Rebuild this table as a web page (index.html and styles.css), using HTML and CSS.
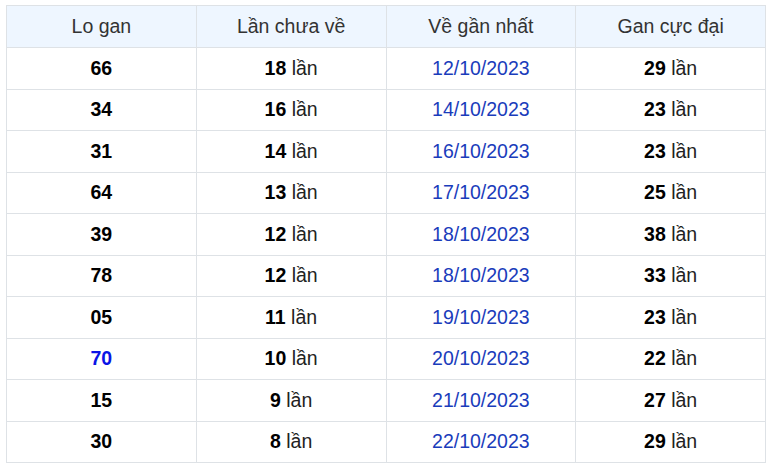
FILE: index.html
```html
<!DOCTYPE html>
<html>
<head>
<meta charset="utf-8">
<link rel="stylesheet" href="styles.css">
</head>
<body>
<table class="gan">
  <thead>
    <tr><th>Lo gan</th><th>Lần chưa về</th><th>Về gần nhất</th><th>Gan cực đại</th></tr>
  </thead>
  <tbody>
    <tr><td><b>66</b></td><td><b>18</b> lần</td><td class="date">12/10/2023</td><td><b>29</b> lần</td></tr>
    <tr><td><b>34</b></td><td><b>16</b> lần</td><td class="date">14/10/2023</td><td><b>23</b> lần</td></tr>
    <tr><td><b>31</b></td><td><b>14</b> lần</td><td class="date">16/10/2023</td><td><b>23</b> lần</td></tr>
    <tr><td><b>64</b></td><td><b>13</b> lần</td><td class="date">17/10/2023</td><td><b>25</b> lần</td></tr>
    <tr><td><b>39</b></td><td><b>12</b> lần</td><td class="date">18/10/2023</td><td><b>38</b> lần</td></tr>
    <tr><td><b>78</b></td><td><b>12</b> lần</td><td class="date">18/10/2023</td><td><b>33</b> lần</td></tr>
    <tr><td><b>05</b></td><td><b>11</b> lần</td><td class="date">19/10/2023</td><td><b>23</b> lần</td></tr>
    <tr><td><b class="hot">70</b></td><td><b>10</b> lần</td><td class="date">20/10/2023</td><td><b>22</b> lần</td></tr>
    <tr><td><b>15</b></td><td><b>9</b> lần</td><td class="date">21/10/2023</td><td><b>27</b> lần</td></tr>
    <tr><td><b>30</b></td><td><b>8</b> lần</td><td class="date">22/10/2023</td><td><b>29</b> lần</td></tr>
  </tbody>
</table>
</body>
</html>
```
FILE: styles.css
```css
html, body {
  margin: 0;
  padding: 0;
  background: #fff;
}
body {
  padding: 5px 2px 0 6px;
  font-family: "Liberation Sans", Arial, sans-serif;
  font-size: 19.5px;
  color: #222;
}
.gan {
  width: 760px;
  border-collapse: collapse;
  table-layout: fixed;
}
.gan th, .gan td {
  border: 1px solid #dee2e6;
  text-align: center;
  padding: 0;
}
.gan th {
  height: 41px;
  background: #eef6ff;
  font-weight: normal;
  color: #333;
}
.gan td {
  height: 40.5px;
  color: #222;
}
.gan b {
  font-weight: bold;
  color: #000;
}
.gan .date {
  color: #1a3cbb;
}
.gan b.hot {
  color: #0a14e6;
}
```
